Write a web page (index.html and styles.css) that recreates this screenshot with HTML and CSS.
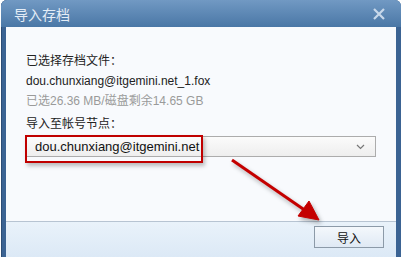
FILE: index.html
```html
<!doctype html>
<html>
    <head>
        <title>导入存档</title>
        <meta charset="utf-8">
        <link rel="stylesheet" href="styles.css">
    </head>
    <body>
        <div id="window">
            <div id="titlebar">
                <span id="title">导入存档</span>
                <svg id="close" width="12" height="12" viewBox="0 0 12 12">
                    <path d="M1 1 L11 11 M11 1 L1 11" stroke="#c8d8ea" stroke-width="2.2"/>
                </svg>
            </div>
            <div id="content">
                <div class="line">已选择存档文件：</div>
                <div class="line">dou.chunxiang@itgemini.net_1.fox</div>
                <div class="line muted">已选26.36 MB/磁盘剩余14.65 GB</div>
                <div class="line label">导入至帐号节点：</div>
                <div id="select">
                    <span>dou.chunxiang@itgemini.net</span>
                    <svg width="9" height="6" viewBox="0 0 9 6">
                        <path d="M1 1 L4.5 4.5 L8 1" stroke="#777" stroke-width="1.2" fill="none"/>
                    </svg>
                    <div id="highlight"></div>
                </div>
            </div>
            <div id="footer">
                <button id="import">导入</button>
            </div>
            <svg id="arrow" width="403" height="257" viewBox="0 0 403 257">
                <g fill="#c40000" stroke="#c40000">
                    <line x1="232" y1="160" x2="306" y2="211" stroke-width="3"/>
                    <path d="M319 220 L298 216 L309 201 Z" stroke-width="1"/>
                </g>
            </svg>
        </div>
    </body>
</html>
```

FILE: styles.css
```css
body {
    margin: 0;
    background-color: #ffffff;
    font-family: "Liberation Sans", "Noto Sans CJK SC", sans-serif;
    font-size: 12px;
    color: #222222;
}
#window {
    position: relative;
    width: 390px;
    height: 257px;
    margin-left: 1px;
    padding: 0 5px 0 5px;
    border-radius: 6px 6px 0 0;
    background-color: #3b6393;
    box-shadow: inset 1px 0 0 #2c4c74;
    display: flex;
    flex-direction: column;
}
#titlebar {
    height: 27px;
    margin: 0 -5px;
    padding: 0 16px 0 13px;
    border-radius: 6px 6px 0 0;
    background-image: linear-gradient(#7199c3, #4a77a6);
    display: flex;
    align-items: center;
    justify-content: space-between;
}
#title {
    font-family: "Noto Sans CJK SC", sans-serif;
    font-size: 14px;
    color: #e4edf7;
}
#content {
    height: 195px;
    box-sizing: border-box;
    padding: 24px 20px 0 20px;
    background-color: #f8fafd;
    border-bottom: 1px solid #b7c4d2;
}
.line {
    line-height: 20px;
    height: 20px;
}
.muted {
    color: #9a9a9a;
}
.label {
    margin-top: 3px;
}
#select {
    position: relative;
    height: 19px;
    margin-top: 2px;
    padding: 0 10px 0 8px;
    border: 1px solid #acacac;
    background-image: linear-gradient(#fbfbfb, #eeeeee);
    display: flex;
    align-items: center;
    justify-content: space-between;
    font-size: 13px;
    color: #111111;
}
#highlight {
    position: absolute;
    left: -2px;
    top: -2px;
    width: 174px;
    height: 24px;
    border: 2px solid #c00000;
    box-shadow: 2px 3px 4px rgba(0, 0, 0, 0.25);
}
#footer {
    flex: 1;
    background-image: linear-gradient(#e9f2fa, #dce9f6);
    display: flex;
    justify-content: flex-end;
    align-items: flex-start;
    padding: 4px 12px 0 0;
}
#import {
    width: 70px;
    height: 22px;
    border: 1px solid #8c9aa8;
    background-image: linear-gradient(#f4f8fc, #dfe9f4);
    font-family: "Noto Sans CJK SC", sans-serif;
    font-size: 12px;
    color: #111111;
    padding: 0;
}
#arrow {
    position: absolute;
    left: -1px;
    top: 0;
    filter: drop-shadow(2px 3px 2px rgba(0, 0, 0, 0.3));
}
```
